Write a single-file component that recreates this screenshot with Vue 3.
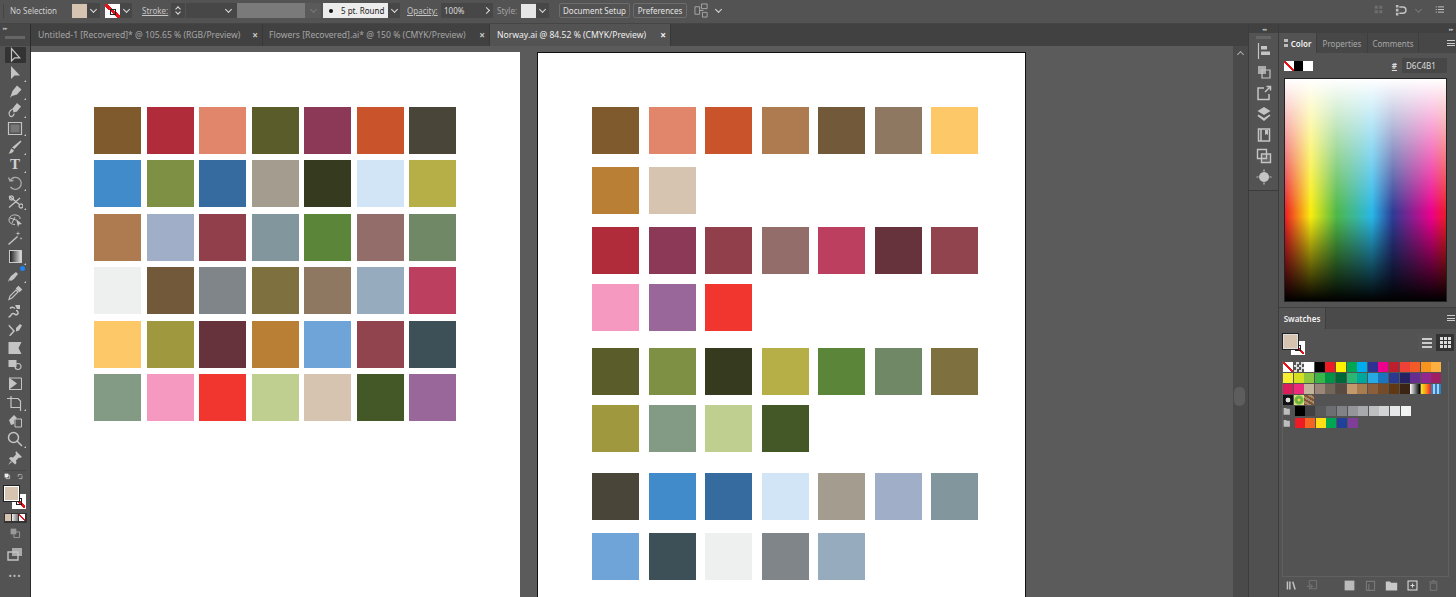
<script setup>
import { h } from 'vue'

// small svg helper, d = filled path, s = stroked path
const Ico = (props) =>
  h('svg', { width: props.size || 16, height: props.size || 16, viewBox: '0 0 16 16', class: 'ico' }, [
    props.d ? h('path', { d: props.d, fill: props.fill || '#c4c4c4' }) : null,
    props.s ? h('path', { d: props.s, fill: 'none', stroke: props.stroke || '#c4c4c4', 'stroke-width': props.sw || 1.2 }) : null,
  ])
Ico.props = ['d', 's', 'fill', 'stroke', 'sw', 'size']

const tools = [
  { s: 'M4.5 1.5V14l3.2-3.2h5z', active: true },
  { d: 'M4 1v13l3.5-3.5H13z', c: 1 },
  { d: 'M10 1.5l4.5 4-4.5 5-5 1.5-2 2 2.5-7z', c: 1 },
  { d: 'M10 1l4 3.5-4 5-3.5 1-1-4z', s: 'M5.5 7C2 9 1 12 3 14c2 1.5 4-.5 4-2.5', c: 1 },
  { d: 'M3.5 4.5h9v8h-9z', s: 'M1.5 2.5h13v12h-13z', fill: '#777', c: 1 },
  { d: 'M13.5 1.5l1 1-7 7.5-2.5-1.5zM4.5 9.5L7 11.5C6 14 3.5 14.5 1.5 14.5 3 13.500 3 11 4.500 9.500z', c: 1 },
  { text: 'T', c: 1 },
  { s: 'M3 5.500A6 6 0 1 1 3.500 12M1.500 2.500L3 6l3.500-.5', sw: 1.3, stroke: '#aaa', c: 1 },
  { s: 'M2 2l11 9M2 13.500L13 4M2.500 4a2 2 0 1 0 0-.1M12 12a2 2 0 1 0 0-.1', sw: 1.3, c: 1 },
  { s: 'M2 8c0-4 4-5.500 7-5s4.500 2 4 4M2 8c0 3 3 4.500 6 4.500M3 6l6 2M5 11l3-6', sw: 1, d: 'M9 7l6 5-3 .5-1 2.500z', c: 0 },
  { d: 'M1 14l9-8 1 1-9 8zM11 1l.5 2 2 .5-2 .5-.5 2-.5-2-2-.5 2-.5zM14 7l.4 1 1 .4-1 .4-.4 1-.4-1-1-.4 1-.4z', c: 0 },
  { grad: 1, c: 1 },
  { d: 'M2 12l2 2 3-2 4-5-2-2-5 4zM1 15l2-2-1-1z', c: 1 },
  { s: 'M2 14.500l1-3.500 6-6 2 2-6 6zM9.500 3.500l2-2 3 3-2 2z', d: 'M9.500 3.500l2-2 3 3-2 2-1-1z', sw: 1.1 },
  { s: 'M1.500 14c3 0 2-3.500 4.500-3.500s2 2 4 1 1-4-1-4M3 5.500c2-2 4-1 5 0', sw: 1.5, d: 'M8 2h5v4h-3z' },
  { d: 'M9 6l4-4 2 1.500-3 5-3 1zM8 9L2 2.500l-.5 1.500L6 9 2 13.500l1.500.5z', c: 0 },
  { d: 'M1.500 2h13l-3 6 3 6h-13z', c: 0 },
  { d: 'M1.500 2h8v7h-8z', s: 'M8 8.500a3 3 0 1 0 6 0 3 3 0 1 0-6 0z', c: 0 },
  { d: 'M2 1.500l8 6-8 6z', s: 'M2 2h12.500v11.500H2', sw: 1, c: 0 },
  { s: 'M0 3.500h4M4 1v11.500h9.500V16M4 3.500h7l2.500 2.500v6.500', sw: 1.2, c: 1 },
  { d: 'M2 7l5-5 3 3-3 2v4l-3 1z', s: 'M8 6h6.500v8H8z', sw: 1, c: 0 },
  { s: 'M1.500 6.500a5 5 0 1 0 10 0 5 5 0 1 0-10 0zM10 10l5 5', sw: 1.5, c: 1 },
  { d: 'M9 1l6 6-2 1-1-.5-3 3 .5 2.500-1.500 1.500-6-6L3.500 7 6 7.500l3-3L8.500 3zM4 11l-3 4 4-3z', c: 0 },
]

const rowA = ['#7f5a2c', '#b12c3a', '#e2866b', '#5a5c29', '#8c3857', '#c9542b', '#4a4539',
  '#418bcb', '#7e9044', '#366b9f', '#a49c8f', '#363a1f', '#d2e5f6', '#b6ae47',
  '#ae7a4f', '#a0afc7', '#923f4c', '#82969e', '#5b8639', '#926d6a', '#708866',
  '#edf0ef', '#71593a', '#80858a', '#7e703f', '#8f7861', '#97abbf', '#bd3f5f',
  '#fcc868', '#9f983e', '#66323c', '#b98035', '#6fa4d9', '#91444d', '#3d4f57',
  '#839b85', '#f599c0', '#f1352f', '#bfcf90', '#d6c4b1', '#445827', '#99679a']

const groups = [
  ['#7f5a2c', '#e2866b', '#c9542b', '#ae7a4f', '#71593a', '#8f7861', '#fcc868', '#b98035', '#d6c4b1'],
  ['#b12c3a', '#8c3857', '#923f4c', '#926d6a', '#bd3f5f', '#66323c', '#91444d', '#f599c0', '#99679a', '#f1352f'],
  ['#5a5c29', '#7e9044', '#363a1f', '#b6ae47', '#5b8639', '#708866', '#7e703f', '#9f983e', '#839b85', '#bfcf90', '#445827'],
  ['#4a4539', '#418bcb', '#366b9f', '#d2e5f6', '#a49c8f', '#a0afc7', '#82969e', '#6fa4d9', '#3d4f57', '#edf0ef', '#80858a', '#97abbf'],
]

const swatchRows = [
  ['none', 'reg', '#fff', '#000', '#ed1c24', '#fff200', '#00a651', '#00aeef', '#2e3192', '#ec008c', '#be1e2d', '#ef4136', '#f15a29', '#f7941d', '#fbb040',
    '#f9ed32', '#d7df23', '#8dc63f', '#39b54a', '#009444', '#006838', '#2bb673', '#00a79d', '#27aae1', '#1c75bc', '#2b3990', '#262262', '#662d91', '#92278f', '#9e1f63',
    '#da1c5c', '#ee2a7b', '#c2b59b', '#9b8579', '#726658', '#594a42', '#c49a6c', '#a97c50', '#8b5e3c', '#754c29', '#603913', '#3c2415',
    'linear-gradient(90deg,#fff,#000)', 'linear-gradient(90deg,#f7ec13,#f7941d,#ed1c24)', 'repeating-linear-gradient(90deg,#2c7fc4 0 2px,#a5cfee 2px 4px)',
    'radial-gradient(circle,#ddd 30%,#111 38%)', 'radial-gradient(circle,#e8d84a 20%,#5da83a 24%,#7bbf4a 60%,#d9e27a 70%)', 'repeating-linear-gradient(30deg,#7d5436 0 2px,#a98a68 2px 4px)'],
]
const grays = ['#000', '#414042', '#58595b', '#6d6e71', '#808285', '#939598', '#a7a9ac', '#bcbec0', '#d1d3d4', '#e6e7e8', '#f1f2f2']
const brights = ['#ed1c24', '#f26522', '#ffde17', '#00a651', '#21409a', '#7f3f98']

const dock = [
  { d: 'M5 3h6v3.500H5zM5 8.500h9V12H5z', s: 'M2.500 0v16' },
  { d: 'M2 2h8v8H2z', s: 'M6 6h8v8H6z', fill: '#aaa' },
  { s: 'M8 3H2v11.500h11V9M9 7l5.500-5.500M10.500 1.500h4v4', sw: 1.5 },
  { d: 'M8 1l6.500 4L8 9 1.500 5zM2.500 8.500L8 12l5.500-3.500 1 1L8 15l-6.500-5z' },
  { d: 'M9 3h3v5l-1.500-1L9 8z', s: 'M2.500 2h11v12h-11zM5 2v12', sw: 1.5 },
  { s: 'M1.500 1.500h9v9h-9zM5.500 6h9v8.500h-9z', sw: 1.4, d: 'M6 6.500h8v7.500H6z', fill: '#666' },
  { d: 'M8 3a5 5 0 1 0 .1 0z', s: 'M8 .5v2M8 13.500v2M.5 8h2M13.500 8h2', sw: 1.2 },
]

const footerIcons = {
  lib: { s: 'M3 3v10M6 3v10M9.500 3.500l3 9.500', sw: 1.8 },
  place: { s: 'M4 2h9v10H4zM1 9h7M5 6l3 3-3 3', sw: 1.1, stroke: '#777' },
  menu: { d: 'M2 2h12v12H2z', fill: '#bbb' },
  square: { s: 'M3 3h10v11H3zM6 6v8', sw: 1.4, stroke: '#777' },
  folder: { d: 'M1 3h5l1.500 1.500H15V14H1z', fill: '#c8c8c8' },
  add: { s: 'M2.500 2.500h11v11h-11zM8 5.500v5M5.500 8h5', sw: 1.3, stroke: '#ddd' },
  trash: { s: 'M4 5h8v9H4zM3 3.500h10M6.500 2h3', sw: 1.2, stroke: '#777' },
}
</script>

<template>
  <div class="app">
    <!-- control bar -->
    <header class="control-bar">
      <i class="grip" />
      <span class="lbl no-sel">No Selection</span>
      <span class="swatch fill-swatch" />
      <span class="drop"><i class="chev" /></span>
      <span class="swatch none stroke-swatch"><i class="stroke-dot" /></span>
      <span class="drop d2"><i class="chev" /></span>
      <span class="lbl link stroke-lbl">Stroke:</span>
      <span class="spin"><i class="chev up" /><i class="chev" /></span>
      <span class="field stroke-field" />
      <span class="drop d3"><i class="chev" /></span>
      <span class="var-bar" />
      <span class="drop d4"><i class="chev dim" /></span>
      <span class="brush"><i class="dot" /><span>5 pt. Round</span></span>
      <span class="drop d2"><i class="chev" /></span>
      <span class="lbl link op-lbl">Opacity:</span>
      <span class="field op-field">100%</span>
      <span class="drop d5"><i class="chev right" /></span>
      <span class="lbl dim-lbl">Style:</span>
      <span class="swatch style-swatch" />
      <span class="drop"><i class="chev" /></span>
      <button type="button" class="btn doc-btn">Document Setup</button>
      <button type="button" class="btn pref-btn">Preferences</button>
      <Ico class="arrange" :size="15" s="M1 4h5v8H1zM6 8h4M8 1h6v5H8zM9 10h5v5H9z" :sw="1" stroke="#aaa" />
      <span class="drop d6"><i class="chev" /></span>
      <span class="spacer" />
      <Ico :size="12" d="M1 1h4v4H1zM7 1h4v4H7zM1 7h4v4H1zM7 7h4v4H7z" fill="#6e6e6e" />
      <Ico class="magnet" :size="14" d="M1 1h3v3H1zM1 5.500h3v3H1zM1 10h3v3H1z" s="M5 3.500h4a3.500 3.500 0 0 1 0 7H5" fill="#bbb" :sw="1.600" />
      <i class="chev dim right-chev" />
      <Ico class="list" :size="12" s="M4 2.500h8M4 6h8M4 9.500h8M1 2.500h1.500M1 6h1.500M1 9.500h1.500" :sw="1.300" />
    </header>

    <div class="main">
      <!-- left tools -->
      <aside class="toolbar">
        <div class="tb-head"><i class="arrows">▸▸</i><i class="dock-grip" /></div>
        <div class="tool-list">
          <div v-for="(t, i) in tools" :key="i" class="tool" :class="{ active: t.active, corner: t.c }">
            <span v-if="t.text" class="tool-t">T</span>
            <span v-else-if="t.grad" class="tool-grad" />
            <Ico v-else v-bind="t" />
            <i v-if="i === 12" class="blue-dot" />
          </div>
        </div>
        <div class="sep" />
        <div class="defaults">
          <Ico :size="10" d="M1 1h6v6H1z" s="M3.500 3.500h5.500v5.500H3.500z" fill="#eee" stroke="#eee" :sw="1" />
          <Ico class="swap" :size="10" s="M2 6V2.500h5.500M8 4v5H3" :sw="1.200" />
        </div>
        <div class="fill-stroke">
          <span class="stroke-big none"><i /></span>
          <span class="fill-big" />
        </div>
        <div class="modes">
          <span class="m m1" /><span class="m m2" /><span class="m none" />
        </div>
        <Ico class="draw" :size="13" d="M2 2h7v7H2z" s="M6 6h7v7H6z" fill="#999" stroke="#999" />
        <Ico class="screen" :size="16" d="M5 2h10v8H5z" s="M1 6h10v8H1z" fill="#aaa" :sw="1.400" />
        <div class="more">•••</div>
      </aside>

      <!-- document area -->
      <section class="workspace">
        <nav class="tabs">
          <div class="tab t1"><span>Untitled-1 [Recovered]* @ 105.65 % (RGB/Preview)</span><b>×</b></div>
          <div class="tab t2"><span>Flowers [Recovered].ai* @ 150 % (CMYK/Preview)</span><b>×</b></div>
          <div class="tab t3 on"><span>Norway.ai @ 84.52 % (CMYK/Preview)</span><b>×</b></div>
        </nav>
        <div class="canvas-row">
          <div class="canvas">
            <div class="artboard a1">
              <div class="grid-a">
                <span v-for="(c, i) in rowA" :key="i" class="chip" :style="{ background: c }" />
              </div>
            </div>
            <div class="artboard a2">
              <div v-for="(g, gi) in groups" :key="gi" class="group" :class="'g' + gi">
                <span v-for="c in g" :key="c" class="chip" :style="{ background: c }" />
              </div>
            </div>
          </div>
          <div class="scroll"><i class="chev up sc-up" /><i class="thumb" /></div>
        </div>
      </section>

      <!-- collapsed dock -->
      <aside class="dock">
        <div class="dock-top"><i class="arrows">◂◂</i></div>
        <div class="dock-box">
          <i class="dock-grip" />
          <Ico v-for="(d, i) in dock" :key="i" v-bind="d" />
        </div>
      </aside>

      <!-- panels -->
      <aside class="panels">
        <div class="panels-top"><i class="arrows">▸▸</i></div>
        <div class="panel-tabs">
          <div class="ptab on p-color"><i class="updown" />Color</div>
          <div class="ptab p-wide">Properties</div>
          <div class="ptab p-wide">Comments</div>
          <i class="burger" />
        </div>
        <div class="color-body">
          <div class="color-top">
            <div class="mini"><span class="none" /><span class="k" /><span class="w" /></div>
            <span class="hash">#</span>
            <span class="hex">D6C4B1</span>
          </div>
          <div class="spectrum" />
        </div>

        <div class="panel-tabs sw-tabs">
          <div class="ptab on sw-tab">Swatches</div>
          <i class="burger" />
        </div>
        <div class="sw-body">
          <div class="sw-head">
            <div class="sw-fs"><span class="stroke-mid none"><i /></span><span class="fill-mid" /></div>
            <div class="views">
              <span class="view"><i class="lines" /></span>
              <span class="view on"><i class="cells" /></span>
            </div>
          </div>
          <div class="sw-box">
            <div class="sw-grid">
              <template v-for="(c, i) in swatchRows[0]" :key="i">
                <span v-if="c === 'none'" class="cell none" />
                <span v-else-if="c === 'reg'" class="cell reg" />
                <span v-else class="cell" :style="{ background: c }" />
              </template>
            </div>
            <div class="sw-line">
              <Ico class="folder" :size="10" d="M1 3h4l1 1.500h5V14H1z" fill="#bdbdbd" />
              <span v-for="c in grays" :key="c" class="cell" :style="{ background: c }" />
            </div>
            <div class="sw-line">
              <Ico class="folder" :size="10" d="M1 3h4l1 1.500h5V14H1z" fill="#bdbdbd" />
              <span v-for="c in brights" :key="c" class="cell" :style="{ background: c }" />
            </div>
          </div>
          <div class="sw-foot">
            <Ico :size="13" v-bind="footerIcons.lib" />
            <Ico :size="13" v-bind="footerIcons.place" />
            <span class="spacer" />
            <Ico :size="13" v-bind="footerIcons.menu" />
            <Ico :size="13" v-bind="footerIcons.square" />
            <Ico :size="13" v-bind="footerIcons.folder" />
            <Ico :size="13" v-bind="footerIcons.add" />
            <Ico :size="13" v-bind="footerIcons.trash" />
          </div>
        </div>
      </aside>
    </div>
  </div>
</template>

<style>
html, body { margin: 0; background: #535353; }
</style>

<style scoped>
.app {
  width: 1456px;
  height: 597px;
  display: flex;
  flex-direction: column;
  overflow: hidden;
  background: #535353;
  color: #d0d0d0;
  font-family: "Noto Sans", "Open Sans", sans-serif;
  font-size: 8px;
}
.ico { display: block; flex: none; }
.spacer { flex: 1; }
i { font-style: normal; }
.none { background: linear-gradient(to top right, #fff 42%, #e5131b 42%, #e5131b 58%, #fff 58%); }

/* control bar */
.control-bar {
  height: 24px;
  flex: none;
  display: flex;
  align-items: center;
  padding: 0 9px 2px 3px;
  box-sizing: border-box;
  background: #535353;
  border-bottom: 1px solid #454545;
}
.grip { width: 1px; height: 14px; background: #444; margin-right: 6px; }
.lbl { white-space: nowrap; color: #c6c6c6; }
.no-sel { width: 62px; color: #cfcfcf; }
.swatch { display: block; flex: none; height: 14px; box-sizing: border-box; }
.fill-swatch { width: 15px; background: #d6c4b1; }
.stroke-swatch { width: 15px; position: relative; margin-left: 5px; }
.stroke-dot { position: absolute; left: 5px; top: 5px; width: 4px; height: 4px; border: 1px solid #222; }
.drop {
  width: 13px; height: 15px; flex: none;
  display: flex; align-items: center; justify-content: center;
  background: #474747;
}
.drop.d2 { width: 12px; }
.drop.d3 { width: 18px; }
.drop.d4 { width: 16px; background: #5a5a5a; }
.drop.d5 { width: 14px; }
.drop.d6 { width: 10px; margin-left: 4px; background: none; }
.chev {
  display: block; width: 4px; height: 4px;
  border-right: 1.3px solid #ddd; border-bottom: 1.3px solid #ddd;
  transform: translateY(-1px) rotate(45deg);
}
.chev.up { transform: translateY(1px) rotate(-135deg); }
.chev.right { transform: rotate(-45deg); }
.chev.dim { border-color: #777; }
.link { text-decoration: underline; }
.stroke-lbl { margin-left: 10px; width: 29px; }
.spin {
  width: 14px; height: 15px; background: #474747;
  display: flex; flex-direction: column; align-items: center; justify-content: center; gap: 1px;
}
.spin .chev { width: 3px; height: 3px; }
.field { height: 15px; background: #474747; margin-left: 1px; display: flex; align-items: center; box-sizing: border-box; }
.stroke-field { width: 33px; }
.var-bar { width: 68px; height: 15px; background: #7a7a7a; }
.brush {
  width: 65px; height: 15px; margin-left: 2px; background: #ececec; color: #222;
  display: flex; align-items: center; gap: 8px; padding-left: 6px; box-sizing: border-box;
}
.dot { width: 4px; height: 4px; border-radius: 50%; background: #111; }
.op-lbl { margin-left: 7px; width: 33px; }
.op-field { width: 38px; padding-left: 3px; color: #ddd; }
.dim-lbl { margin-left: 4px; width: 24px; color: #a4a4a4; }
.style-swatch { width: 15px; background: #e6e6e6; }
.btn {
  height: 15px; padding: 0; margin: 0;
  background: #535353; border: 1px solid #6c6c6c; border-radius: 2px;
  color: #e2e2e2; font: inherit; white-space: nowrap; flex: none;
}
.doc-btn { width: 71px; margin-left: 10px; }
.pref-btn { width: 54px; margin-left: 3px; }
.arrange { margin-left: 7px; }
.magnet { margin-left: 9px; }
.right-chev { margin-left: 7px; margin-right: 14px; }

/* main */
.main { flex: 1; display: flex; min-height: 0; }
.toolbar {
  width: 31px; flex: none; box-sizing: border-box;
  background: #535353; border-right: 1px solid #2c2c2c;
  display: flex; flex-direction: column; align-items: center;
  position: relative;
}
.tb-head { height: 22px; width: 100%; background: #474747; display: flex; flex-direction: column; align-items: flex-start; }
.arrows { font-size: 5px; line-height: 8px; color: #bbb; letter-spacing: -1px; padding: 0 3px; }
.dock-grip { display: block; width: 20px; height: 3px; background: #666; margin: 4px auto 0; }
.tool-list { display: flex; flex-direction: column; }
.tool {
  width: 21px; height: 18.3px; position: relative;
  display: flex; align-items: center; justify-content: center;
}
.tool.active { background: #333; height: 16px; margin: 1.15px 0; border-radius: 1px; }
.tool.corner::after {
  content: ""; position: absolute; right: 0; bottom: 1px;
  border-left: 2px solid transparent; border-bottom: 2px solid #ccc;
}
.tool-t { font: 700 15px/1 "Liberation Serif", serif; color: #d0d0d0; }
.tool-grad {
  width: 13px; height: 13px; box-sizing: border-box; border: 1px solid #ccc;
  background: linear-gradient(90deg, #222, #ddd);
}
.blue-dot { position: absolute; right: 1px; top: 0; width: 5px; height: 5px; border-radius: 50%; background: #1f83f0; }
.sep { width: 22px; height: 1px; background: #474747; margin-top: 3px; }
.defaults { width: 23px; display: flex; justify-content: space-between; margin-top: 2px; }
.fill-stroke { width: 23px; height: 25px; position: relative; margin-top: 3px; }
.fill-big { position: absolute; left: 0; top: 0; width: 15px; height: 15px; box-sizing: border-box; background: #d6c4b1; border: 1px solid #fff; outline: 1px solid #222; }
.stroke-big { position: absolute; left: 8px; top: 8px; width: 14px; height: 15px; box-sizing: border-box; border: 1px solid #fff; }
.stroke-big i { position: absolute; inset: 3px; border: 1px solid #222; }
.modes { display: flex; gap: 1px; width: 23px; height: 8px; margin-top: 2px; background: #333; padding: 1px 0; justify-content: center; }
.m { width: 6px; height: 7px; }
.modes .none { width: 6px; height: 7px; }
.m1 { background: #d6c4b1; }
.m2 { background: linear-gradient(90deg, #eee, #777); }
.draw { margin-top: 4px; }
.screen { margin-top: 6px; }
.more { margin-top: 10px; font-size: 9px; letter-spacing: 1px; color: #bbb; line-height: 8px; }

/* tabs + canvas */
.workspace { flex: 1; min-width: 0; display: flex; flex-direction: column; }
.tabs { height: 22px; flex: none; display: flex; background: #414141; }
.tab {
  display: flex; align-items: center; justify-content: space-between;
  box-sizing: border-box; padding: 0 4px 0 7px;
  font-size: 8.6px; color: #a6a6a6; white-space: nowrap;
  border-right: 1px solid #383838;
}
.tab b { font-size: 10px; color: #c8c8c8; font-weight: 700; }
.t1 { width: 232px; }
.t2 { width: 227px; padding-left: 6px; }
.t3 { width: 181px; }
.tab.on { background: #535353; color: #eee; }
.tab.on b { color: #f2f2f2; }
.canvas-row { flex: 1; display: flex; min-height: 0; }
.canvas { flex: 1; min-width: 0; display: flex; gap: 17px; padding-top: 6px; background: #5b5b5b; overflow: hidden; align-items: flex-start; }
.artboard { height: 700px; background: #fff; box-sizing: border-box; flex: none; }
.a1 { width: 489px; padding: 55px 0 0 63px; }
.a2 { width: 489px; padding: 54px 0 0 54px; border: 1px solid #111; }
.grid-a { display: grid; grid-template-columns: repeat(7, 47px); column-gap: 5.5px; row-gap: 6.4px; }
.chip { display: block; width: 47px; height: 47px; }
.group { display: grid; grid-template-columns: repeat(7, 47px); column-gap: 9.500px; }
.g0 { row-gap: 13px; margin-bottom: 13px; }
.g1 { row-gap: 10px; margin-bottom: 17px; }
.g2 { row-gap: 10px; margin-bottom: 21px; }
.g3 { row-gap: 13px; }
.scroll { width: 15px; flex: none; background: #4a4a4a; position: relative; box-sizing: border-box; }
.sc-up { position: absolute; left: 5px; top: 5px; border-color: #aaa; }
.thumb { position: absolute; left: 1px; top: 341px; width: 11px; height: 19px; border-radius: 5px; background: #5d5d5d; }

/* dock */
.dock { width: 31px; flex: none; box-sizing: border-box; background: #505050; border-left: 1px solid #3c3c3c; border-right: 1px solid #3c3c3c; }
.dock-top { height: 9px; background: #414141; text-align: center; line-height: 8px; }
.dock-top .arrows { padding: 0; }
.dock-box {
  height: 158px; box-sizing: border-box; padding-top: 2px;
  display: flex; flex-direction: column; align-items: center; gap: 5px;
  background: #535353; border-bottom: 1px solid #3c3c3c;
}
.dock-box .dock-grip { margin: 1px 0 -1px; width: 15px; }

/* panels */
.panels { width: 177px; flex: none; display: flex; flex-direction: column; background: #535353; }
.panels-top { height: 9px; background: #414141; text-align: right; line-height: 8px; }
.panel-tabs { height: 20px; flex: none; display: flex; align-items: stretch; background: #474747; position: relative; }
.ptab {
  display: flex; align-items: center; justify-content: center; box-sizing: border-box;
  font-size: 8px; color: #a8a8a8; border-right: 1px solid #3e3e3e; white-space: nowrap;
}
.p-color { width: 38px; }
.p-wide { width: 51px; }
.ptab.on { background: #535353; color: #f2f2f2; font-weight: 600; }
.updown { width: 4px; height: 8px; margin-right: 3px; background: linear-gradient(#bbb 0 35%, transparent 35% 65%, #bbb 65%); }
.burger {
  position: absolute; right: 1px; top: 7px; width: 8px; height: 6px; box-sizing: border-box;
  border-top: 1px solid #ccc; border-bottom: 1px solid #ccc;
  background: linear-gradient(#ccc, #ccc) center / 100% 1px no-repeat;
}
.color-body { height: 255px; flex: none; box-sizing: border-box; padding: 5px 9px 0 5px; border-bottom: 1px solid #3e3e3e; }
.color-top { display: flex; align-items: center; height: 15px; }
.mini { display: flex; width: 29px; height: 10px; }
.mini span { flex: 1; }
.mini .k { background: #000; }
.mini .w { background: #fff; }
.hash { margin-left: auto; margin-right: 5px; text-decoration: underline; font-weight: 700; font-size: 8px; color: #ddd; }
.hex { width: 45px; height: 15px; box-sizing: border-box; padding-left: 4px; line-height: 15px; background: #474747; color: #ddd; font-size: 8px; }
.spectrum {
  width: 163px; height: 224px; margin-top: 5px; box-sizing: border-box; border: 1px solid #222;
  background:
    linear-gradient(to bottom, #fff 0%, rgba(255,255,255,0) 60%, rgba(0,0,0,0) 62%, #000 100%),
    linear-gradient(to right, #ee1c25 0%, #f9ed0f 16%, #4fb848 32%, #29b7e8 54%, #2e3b94 67%, #ec008c 91%, #ee1c25 100%);
}
.sw-tabs { height: 21px; background: #4a4a4a; }
.sw-tab { width: 47px; }
.sw-body { flex: 1; min-height: 0; display: flex; flex-direction: column; padding: 5px 2px 0 4px; }
.sw-head { display: flex; justify-content: space-between; height: 24px; flex: none; }
.sw-fs { position: relative; width: 24px; height: 24px; }
.fill-mid { position: absolute; left: 0; top: 0; width: 15px; height: 15px; background: #d6c4b1; border: 1px solid #ddd; outline: 1px solid #222; box-sizing: border-box; }
.stroke-mid { position: absolute; left: 8px; top: 7px; width: 14px; height: 14px; border: 1px solid #fff; box-sizing: border-box; }
.stroke-mid i { position: absolute; inset: 3px; border: 1px solid #222; }
.views { display: flex; }
.view { width: 18px; height: 17px; display: flex; align-items: center; justify-content: center; background: #555; }
.view.on { background: #333; }
.lines { width: 10px; height: 10px; background: repeating-linear-gradient(#ccc 0 2px, transparent 2px 4px); }
.cells { width: 11px; height: 11px; background: repeating-linear-gradient(#ddd 0 3px, transparent 3px 4px), transparent; -webkit-mask: repeating-linear-gradient(90deg, #000 0 3px, transparent 3px 4px); }
.sw-box {
  margin: 3px 5px 0 -1px; height: 216px; box-sizing: border-box; padding: 1px 0 0 0; flex: none;
  border-bottom: 1px solid #606060; border-left: 1px solid #606060; border-right: 1px solid #606060;
}
.sw-grid { display: grid; grid-template-columns: repeat(15, 10px); grid-auto-rows: 10px; column-gap: 0.6px; row-gap: 0.9px; }
.cell { display: block; width: 10px; height: 10px; }
.reg { background: repeating-conic-gradient(#ddd 0 25%, #555 0 50%) 0 0 / 5px 5px; }
.sw-line { display: flex; gap: 0.6px; align-items: center; margin-top: 1.500px; height: 10px; }
.folder { margin-right: 1px; }
.sw-foot { display: flex; align-items: center; height: 16px; gap: 8px; padding: 0 14px 0 2px; }
</style>
